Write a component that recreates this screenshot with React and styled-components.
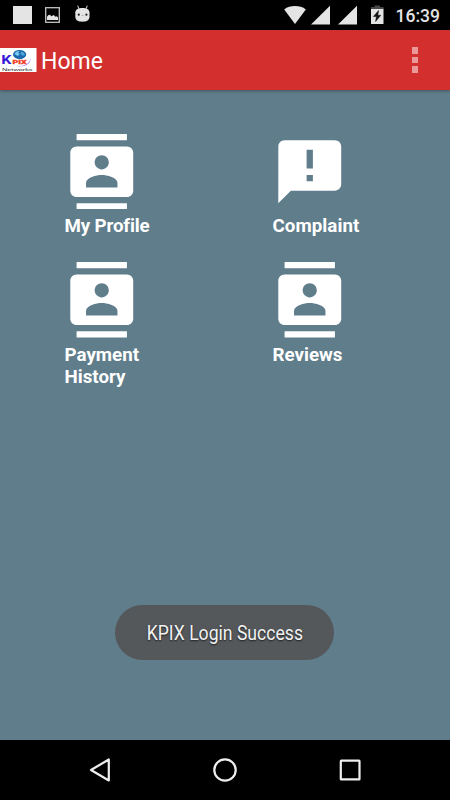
import React from 'react';
import styled, { createGlobalStyle } from 'styled-components';

const ContactsIcon = () => (
    <svg viewBox="0 0 24 24" fill="#fff">
        <path d="M20 0H4v2h16V0zM4 24h16v-2H4v2zM20 4H4c-1.1 0-2 .9-2 2v12c0 1.1.9 2 2 2h16c1.1 0 2-.9 2-2V6c0-1.1-.9-2-2-2zm-8 2.75c1.24 0 2.25 1.01 2.25 2.25s-1.01 2.25-2.25 2.25S9.75 10.24 9.75 9 10.76 6.75 12 6.75zM17 17H7v-1.5c0-1.67 3.33-2.5 5-2.5s5 .83 5 2.5V17z" />
    </svg>
);

const FeedbackIcon = () => (
    <svg viewBox="0 0 24 24" fill="#fff">
        <path d="M20 2H4c-1.1 0-1.99.9-1.99 2L2 22l4-4h14c1.1 0 2-.9 2-2V4c0-1.1-.9-2-2-2zm-7 13h-2v-2h2v2zm0-4h-2V5h2v6z" />
    </svg>
);

const NotificationIcons = () => (
    <svg width="92" height="30" viewBox="0 0 92 30" fill="#e4e4e4">
        <rect x="13" y="6" width="19" height="18" />
        <rect x="45.7" y="7.7" width="13.6" height="14.6" fill="none" stroke="#c4c4c4" strokeWidth="1.3" />
        <path d="M47 20v-3.2l1.2-1.6 1.6-.5 1.7 1.6 2.2-1.2 1.8 1.6 1.3-.4 1.2 1.3V20z" />
        <path d="M75.3 12.2C75.7 9.2 78.4 8 82.4 8s6.7 1.2 7.1 4.2v4.3c0 3.5-2.7 5.2-7.1 5.2s-7.1-1.7-7.1-5.2z" />
        <path d="M79 9l-1.3-3.4M86 9l1.3-3.4" stroke="#c4c4c4" strokeWidth="1.1" />
        <circle cx="78.8" cy="14.7" r="1.1" fill="#222" />
        <circle cx="86.4" cy="14.7" r="1.1" fill="#222" />
        <path d="M81.7 15.4h1.8" stroke="#aaa" strokeWidth="1" />
    </svg>
);

const SystemIcons = () => (
    <svg width="104" height="30" viewBox="0 0 104 30" fill="#e4e4e4">
        <path d="M.2 9.4C3.2 7 7 6 11 6s7.8 1 10.8 3.4L11 24z" />
        <path d="M46 5.8V24.6H27z" />
        <path d="M73 5.8V24.6H54z" />
        <path d="M87 8.5h12.5V24H87z" />
        <path d="M90.5 5.5H96V7h3.5v2H87V7h3.5z" fill="#474747" />
        <path d="M94.6 10.5l-5.2 6h3l-.8 5 5.2-6.2h-3z" fill="#111" stroke="#111" strokeWidth=".5" />
    </svg>
);

const KpixLogo = () => (
    <svg width="36.5" height="24" viewBox="0 0 36.5 24">
        <rect width="36.5" height="24" fill="#fff" />
        <path d="M14 17.6c7 1.6 16-.8 16.4-7.6 1.6 6.5-7.4 10.4-16.4 7.6z" fill="#b7a4f4" />
        <text x="1.2" y="16" fontFamily="Roboto, sans-serif" fontSize="13.5" fontWeight="700" fill="#3718d8" textLength="10.2" lengthAdjust="spacingAndGlyphs">K</text>
        <ellipse cx="19.6" cy="6.6" rx="6.6" ry="4.6" fill="#1b68ad" />
        <path d="M14.5 6c1-2.2 3-3.1 5-2.9l-1.5 1.8 2 1-2.3 2z" fill="#7bcaf0" />
        <path d="M21 3.6l3.3 1.1.4 2.6-2.4.5-1.7-2z" fill="#4fa5d9" />
        <text x="12.6" y="16.4" fontFamily="Roboto, sans-serif" fontSize="6" fontWeight="900" fill="#f33b20" stroke="#f33b20" strokeWidth=".3" textLength="14" lengthAdjust="spacingAndGlyphs">PIX</text>
        <text x="2" y="22.9" fontFamily="Liberation Sans, sans-serif" fontSize="4" fill="#222" textLength="30.5" lengthAdjust="spacingAndGlyphs">Networks</text>
    </svg>
);

const tiles = [
    { label: 'My Profile', icon: ContactsIcon, spacing: '-0.15px' },
    { label: 'Complaint', icon: FeedbackIcon, spacing: '0.05px' },
    { label: 'Payment History', icon: ContactsIcon },
    { label: 'Reviews', icon: ContactsIcon },
];

const App = () => {
    return (
        <Screen>
            <GlobalStyle />
            <StatusBar>
                <NotificationIcons />
                <StatusRight>
                    <SystemIcons />
                    <Clock>16:39</Clock>
                </StatusRight>
            </StatusBar>

            <Toolbar>
                <KpixLogo />
                <Title>Home</Title>
                <MenuButton aria-label="More options">
                    <Dot />
                    <Dot />
                    <Dot />
                </MenuButton>
            </Toolbar>

            <Content>
                <TileGrid>
                    {tiles.map(({ label, icon: Icon, spacing }) => (
                        <Tile key={label}>
                            <Icon />
                            <TileLabel $spacing={spacing}>{label}</TileLabel>
                        </Tile>
                    ))}
                </TileGrid>
                <Toast>
                    <ToastText>KPIX Login Success</ToastText>
                </Toast>
            </Content>

            <NavBar>
                <svg width="24" height="26" viewBox="0 0 24 26">
                    <path d="M3 13L20.8 2.5v21z" />
                </svg>
                <svg width="26" height="26" viewBox="0 0 26 26">
                    <circle cx="13" cy="13" r="10.7" />
                </svg>
                <svg width="24" height="26" viewBox="0 0 24 26">
                    <rect x="2.8" y="3.7" width="18.7" height="18.7" rx=".5" />
                </svg>
            </NavBar>
        </Screen>
    );
}

export default App;

const GlobalStyle = createGlobalStyle`
    body {
        margin: 0;
        font-family: Roboto, sans-serif;
    }

    svg {
        display: block;
        flex-shrink: 0;
    }
`;

const Screen = styled.div`
    display: flex;
    flex-direction: column;
    width: 450px;
    height: 800px;
    overflow: hidden;
    background: #607d8b;
`;

const StatusBar = styled.div`
    display: flex;
    justify-content: space-between;
    height: 30px;
    background: #000;
`;

const StatusRight = styled.div`
    display: flex;
    width: 166px;
`;

const Clock = styled.span`
    margin-left: 7.5px;
    font-size: 17.5px;
    font-weight: 500;
    line-height: 32px;
    color: #e4e4e4;
`;

const Toolbar = styled.header`
    display: flex;
    align-items: center;
    height: 60px;
    background: #d32f2f;
    box-shadow: 0 1px 3px rgba(0, 0, 0, 0.35);
    z-index: 1;
`;

const Title = styled.h1`
    flex: 1;
    margin: 2px 0 0 4.5px;
    font-size: 23px;
    font-weight: 400;
    color: #fff;
`;

const MenuButton = styled.button`
    display: flex;
    flex-direction: column;
    gap: 3.3px;
    margin: 0 32px 0 0;
    padding: 0;
    border: 0;
    background: none;
`;

const Dot = styled.span`
    width: 6.2px;
    height: 6.2px;
    background: #e99797;
`;

const Content = styled.main`
    flex: 1;
    display: flex;
    flex-direction: column;
    justify-content: space-between;
    align-items: center;
    padding-bottom: 80px;
`;

const TileGrid = styled.div`
    align-self: stretch;
    display: grid;
    grid-template-columns: 112px 112px;
    column-gap: 96px;
    grid-auto-rows: 128.8px;
    padding: 43.6px 0 0 64.5px;
`;

const Tile = styled.div`
    svg {
        width: 75.5px;
        height: 75.5px;
        margin-left: -0.8px;
    }
`;

const TileLabel = styled.div`
    margin-top: 6px;
    font-size: 18.75px;
    font-weight: 700;
    line-height: 22px;
    letter-spacing: ${({ $spacing }) => $spacing || 'normal'};
    color: #fff;
`;

const Toast = styled.div`
    display: flex;
    align-items: center;
    justify-content: center;
    width: 219px;
    height: 55px;
    margin-right: 1px;
    border-radius: 28px;
    background: #55585b;
`;

const ToastText = styled.span`
    font-size: 20px;
    white-space: nowrap;
    color: #f2f2f2;
    text-shadow: 0 1px 2px rgba(0, 0, 0, 0.7);
    transform: scaleX(0.88);
`;

const NavBar = styled.nav`
    display: flex;
    justify-content: space-between;
    align-items: center;
    height: 60px;
    padding: 0 88px;
    background: #000;

    svg {
        fill: none;
        stroke: #eee;
        stroke-width: 2.2;
        stroke-linejoin: round;
    }
`;
